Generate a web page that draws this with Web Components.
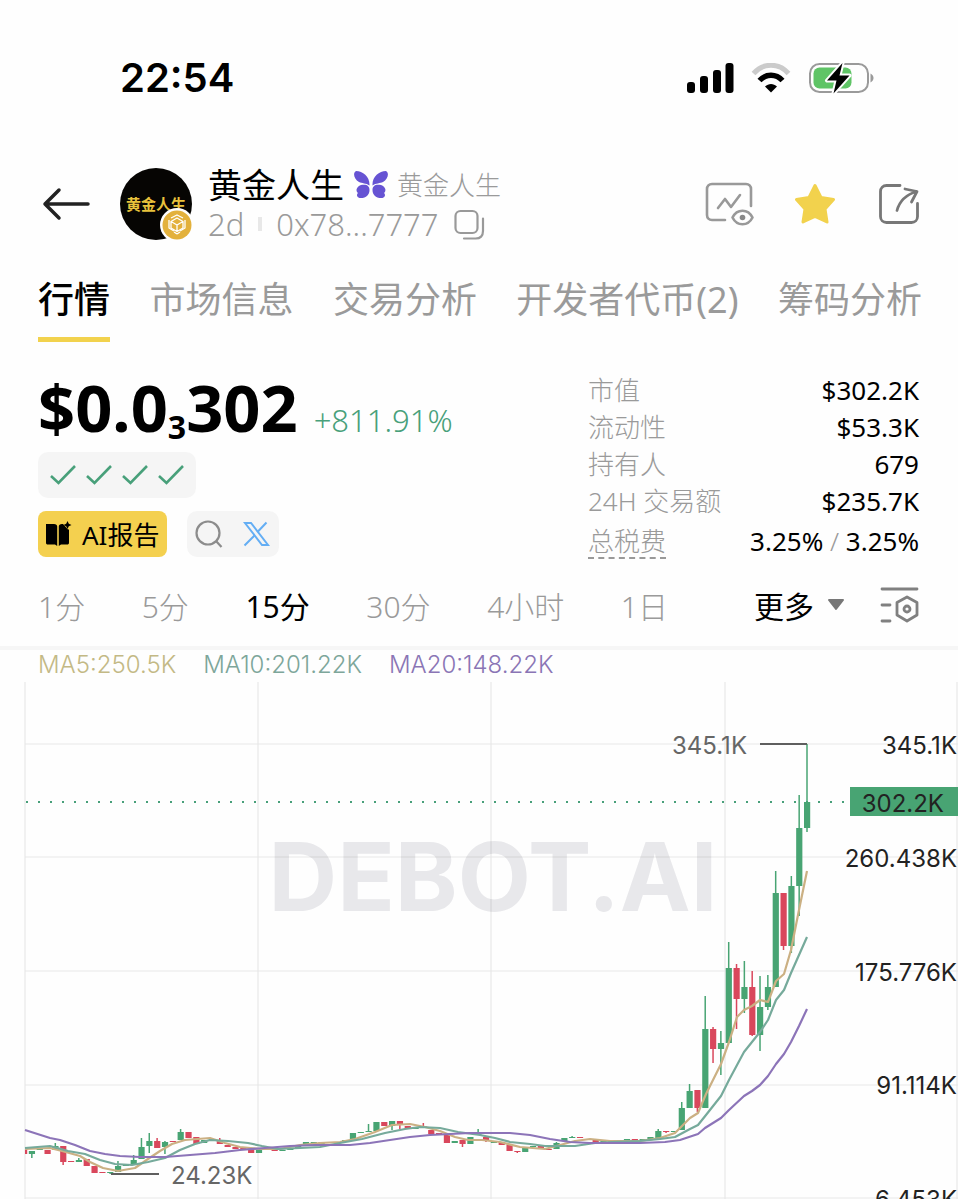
<!DOCTYPE html>
<html lang="zh-CN">
<head>
<meta charset="utf-8">
<meta name="viewport" content="width=device-width, initial-scale=1">
<title>黄金人生</title>
<style>
  body {
    margin: 0;
    background: #fefefe;
    color: #000;
    font-family: "Noto Sans", "Noto Sans CJK SC", sans-serif;
  }
</style>
</head>
<body>
<token-page></token-page>

<script>
const RESET = `
  * { box-sizing: border-box; }
  button, a {
    font: inherit;
    color: inherit;
    background: none;
    border: 0;
    padding: 0;
    margin: 0;
    text-decoration: none;
    cursor: pointer;
    white-space: nowrap;
  }
  svg { display: block; flex-shrink: 0; }
`;

/**
 * <status-bar time="22:54"> - phone status bar
 */
class StatusBar extends HTMLElement {
  constructor() {
    super();
    this.attachShadow({ mode: 'open' });
  }

  connectedCallback() {
    this.shadowRoot.innerHTML = `
      <style>
        ${RESET}
        :host {
          display: flex;
          align-items: center;
          justify-content: space-between;
          height: 156px;
          padding: 0 84px 0 120px;
        }
        time {
          font: 600 40px/48px Inter, sans-serif;
        }
        .icons {
          display: flex;
          align-items: center;
          gap: 17px;
        }
      </style>
      <time>${this.getAttribute('time')}</time>
      <div class="icons">
        <svg width="47" height="30" viewBox="0 0 47 30">
          <rect x="0" y="19" width="8" height="11" rx="3"/>
          <rect x="13" y="13" width="8" height="17" rx="3"/>
          <rect x="26" y="7" width="8" height="23" rx="3"/>
          <rect x="38.500" y="0" width="8" height="30" rx="3"/>
        </svg>
        <svg width="40" height="30" viewBox="0 0 40 30">
          <path d="M2.500 10.500C12 -0.500 28 -0.500 37.500 10.500" fill="none" stroke="#cbcbcb" stroke-width="5"/>
          <path d="M8.500 17.500C15 10.500 25 10.500 31.500 17.500" fill="none" stroke="#000" stroke-width="5.500"/>
          <path d="M14 23.500C17.500 20 22.500 20 26 23.500L20 29.500Z"/>
        </svg>
        <svg width="66" height="34" viewBox="0 0 66 34">
          <rect x="2" y="3" width="58" height="28" rx="9.500" fill="none" stroke="#9a9a9a" stroke-width="2"/>
          <rect x="5.500" y="6.500" width="38" height="21" rx="6" fill="#5fc466"/>
          <path d="M62.500 12.500C66.500 14.500 66.500 19.500 62.500 21.500Z" fill="#9a9a9a"/>
          <path d="M34.500 2L19 19.500H28.500L25.500 32.500L41.500 14.500H31.500Z" fill="#000" stroke="#fefefe" stroke-width="4" stroke-linejoin="round" paint-order="stroke"/>
        </svg>
      </div>
    `;
  }
}

/**
 * <token-header> - back arrow, avatar, token name and address, page actions
 * The default slot holds the token name.
 */
class TokenHeader extends HTMLElement {
  constructor() {
    super();
    this.attachShadow({ mode: 'open' });
  }

  connectedCallback() {
    this.shadowRoot.innerHTML = `
      <style>
        ${RESET}
        :host {
          display: flex;
          align-items: center;
          height: 96px;
          padding: 0 38px 0 42px;
        }
        .avatar {
          position: relative;
          display: flex;
          align-items: center;
          justify-content: center;
          width: 72px;
          height: 72px;
          margin: 0 16px 0 30px;
          border-radius: 50%;
          background: #060503;
          color: #e8c23c;
          font-size: 15px;
          font-weight: 700;
          line-height: 20px;
          flex-shrink: 0;
          white-space: nowrap;
        }
        .chain {
          position: absolute;
          right: -2px;
          bottom: -2px;
        }
        .info { flex: 1; }
        .row {
          display: flex;
          align-items: center;
          height: 40px;
          line-height: 36px;
          color: #9a9a9a;
          white-space: nowrap;
        }
        h1 {
          margin: 0 10px 0 0;
          font-size: 34px;
          font-weight: 400;
          line-height: 36px;
          color: #000;
        }
        .alias {
          margin-left: 9px;
          font-size: 26px;
          font-weight: 300;
        }
        .meta { height: 38px; font-size: 31px; font-weight: 300; }
        .sep {
          width: 4px;
          height: 14px;
          margin: 0 14px;
          background: #e8e8e8;
        }
        .meta button { margin-left: 15px; }
        .actions {
          display: flex;
          align-items: center;
          gap: 41px;
        }
      </style>
      <button aria-label="返回">
        <svg width="48" height="34" viewBox="0 0 48 34" fill="none" stroke="#222" stroke-width="3.500" stroke-linecap="round" stroke-linejoin="round">
          <path d="M46 17H3M17 3L3 17L17 31"/>
        </svg>
      </button>
      <div class="avatar">
        <span>黄金人生</span>
        <svg class="chain" width="34" height="34" viewBox="0 0 34 34">
          <circle cx="17" cy="17" r="17" fill="#fefefe"/>
          <circle cx="17" cy="17" r="14.500" fill="#e3b13c"/>
          <g fill="none" stroke="#fff" stroke-width="1.300" stroke-linejoin="round">
            <path d="M11 10L17 7L23 10M9 12V20L14 23M25 12V20L20 23M17 26L14 24M17 26L20 24"/>
            <path d="M17 10L23 13.500V20L17 23.500L11 20V13.500ZM11 13.500L17 17L23 13.500M17 17V23.500"/>
          </g>
        </svg>
      </div>
      <div class="info">
        <div class="row">
          <h1><slot></slot></h1>
          <svg width="34" height="28" viewBox="0 0 34 28" fill="#6653d3">
            <path d="M15.500 14.500C16 6 9 0 2 0C-1.500 2 0 8 5 11C8 12.500 12 12 15.500 14.500Z"/>
            <path d="M18.500 14.500C18 6 25 0 32 0C35.500 2 34 8 29 11C26 12.500 22 12 18.500 14.500Z"/>
            <path d="M7 14C13 13 15.500 15 15.500 19C15.500 24 12 27.500 5.500 27C2.500 26 2.500 23.500 4 22C1.500 20 2 16 7 14Z"/>
            <path d="M27 14C21 13 18.500 15 18.500 19C18.500 24 22 27.500 28.500 27C31.500 26 31.500 23.500 30 22C32.500 20 32 16 27 14Z"/>
          </svg>
          <span class="alias">${this.getAttribute('alias')}</span>
        </div>
        <div class="row meta">
          <span>${this.getAttribute('age')}</span>
          <span class="sep"></span>
          <span>${this.getAttribute('address')}</span>
          <button aria-label="复制">
            <svg width="31" height="31" viewBox="0 0 31 31" fill="none" stroke="#999" stroke-width="2.200" stroke-linecap="round">
              <rect x="1.500" y="2" width="22" height="22" rx="5"/>
              <path d="M29 9.500V22C29 27 26.500 29.500 21.500 29.500H10"/>
            </svg>
          </button>
        </div>
      </div>
      <div class="actions">
        <button aria-label="图表监控">
          <svg width="49" height="44" viewBox="0 0 49 44" fill="none" stroke="#999" stroke-width="2.600" stroke-linecap="round" stroke-linejoin="round">
            <path d="M46 24V7C46 4 44 2 41 2H7C4 2 2 4 2 7V33C2 36 4 38 7 38H20"/>
            <path d="M13 26L20 17L26 25L35 13"/>
            <path d="M27.500 35.500C32 26.500 43 26.500 47.500 35.500C43 44.500 32 44.500 27.500 35.500Z"/>
            <circle cx="37.500" cy="35.500" r="2.800" fill="#888" stroke="none"/>
          </svg>
        </button>
        <button aria-label="收藏">
          <svg width="42" height="42" viewBox="0 0 42 42">
            <path d="M20 2.500L26 14.500L38.500 16.500L30 26L32 39L20 33.500L8 39L10 26L1.500 16.500L14 14.500Z" fill="#f2d24d" stroke="#f2d24d" stroke-width="3" stroke-linejoin="round"/>
          </svg>
        </button>
        <button aria-label="分享">
          <svg width="42" height="42" viewBox="0 0 42 42" fill="none" stroke="#777" stroke-width="2.800" stroke-linecap="round" stroke-linejoin="round">
            <path d="M22 2.500H8.500C5 2.500 2.500 5 2.500 8.500V33.500C2.500 37 5 39.500 8.500 39.500H33.500C37 39.500 39.500 37 39.500 33.500V20.500"/>
            <path d="M19 27.500C21 20 27 12 38.500 8.500M27 6L39 8.500L33.500 19"/>
          </svg>
        </button>
      </div>
    `;
  }
}

/**
 * <tab-nav> with <tab-item> children, one of them active
 */
class TabNav extends HTMLElement {
  constructor() {
    super();
    this.attachShadow({ mode: 'open' });
  }

  connectedCallback() {
    this.shadowRoot.innerHTML = `
      <style>
        ${RESET}
        :host { display: block; padding: 24px 36px 0 38px; }
        nav { display: flex; justify-content: space-between; }
      </style>
      <nav><slot></slot></nav>
    `;
  }
}

class TabItem extends HTMLElement {
  constructor() {
    super();
    this.attachShadow({ mode: 'open' });
  }

  connectedCallback() {
    this.shadowRoot.innerHTML = `
      <style>
        ${RESET}
        :host { display: block; }
        a {
          display: block;
          height: 66px;
          font-size: 36px;
          line-height: 48px;
          color: #9a9a9a;
          border-bottom: 5px solid transparent;
        }
        :host([active]) a {
          color: #000;
          font-weight: 500;
          border-bottom-color: #f2d24d;
        }
      </style>
      <a href="#"><slot></slot></a>
    `;
  }
}

/**
 * <token-price> - price, change, audit marks and report links
 */
class TokenPrice extends HTMLElement {
  constructor() {
    super();
    this.attachShadow({ mode: 'open' });
  }

  connectedCallback() {
    const check = `
      <svg width="26" height="20" viewBox="0 0 26 20" fill="none" stroke="#48a07a" stroke-width="2.600">
        <path d="M1 11L8.500 18L25 1"/>
      </svg>`;

    this.shadowRoot.innerHTML = `
      <style>
        ${RESET}
        :host { display: block; }
        .price {
          display: flex;
          align-items: baseline;
          gap: 16px;
          height: 86px;
          line-height: 82px;
          white-space: nowrap;
        }
        .value { font-size: 65px; font-weight: 700; }
        sub {
          font-size: 32px;
          line-height: 0;
          vertical-align: -7px;
        }
        .change { font-size: 31px; font-weight: 300; color: #48a07a; }
        .checks {
          display: inline-flex;
          align-items: center;
          gap: 10px;
          height: 46px;
          padding: 0 12px;
          border-radius: 10px;
          background: #f5f5f5;
        }
        .links {
          display: flex;
          gap: 20px;
          margin-top: 13px;
        }
        .report {
          display: flex;
          align-items: center;
          gap: 10px;
          height: 46px;
          padding: 0 8px;
          border-radius: 8px;
          background: #f4d04f;
          font-size: 26px;
        }
        .social {
          display: flex;
          align-items: center;
          gap: 20px;
          height: 46px;
          padding: 0 9px 0 8px;
          border-radius: 10px;
          background: #f5f5f5;
        }
      </style>
      <div class="price">
        <span class="value">$0.0<sub>3</sub>302</span>
        <span class="change">+811.91%</span>
      </div>
      <div class="checks">${check.repeat(4)}</div>
      <div class="links">
        <button class="report">
          <svg width="26" height="26" viewBox="0 0 26 26">
            <path d="M0 3H8C10 3 11.200 4 11.200 5.500V25L9 23.500H2C0.500 23.500 0 23 0 21.500Z"/>
            <path d="M12.800 5.500C12.800 4 14 3 16 3H17L22 8.500H23V21.500C23 23 22.500 23.500 21 23.500H15L12.800 25Z"/>
            <path d="M21.500 0L22.800 2.700L25.500 4L22.800 5.300L21.500 8L20.200 5.300L17.500 4L20.200 2.700Z"/>
          </svg>
          <span>AI报告</span>
        </button>
        <div class="social">
          <button aria-label="搜索">
            <svg width="28" height="28" viewBox="0 0 28 28" fill="none" stroke="#8c8c8c" stroke-width="2.200">
              <circle cx="13" cy="13" r="11.500"/>
              <path d="M21 21L26.500 27"/>
            </svg>
          </button>
          <a href="#" aria-label="X">
            <svg width="27" height="26" viewBox="0 0 27 26" fill="none" stroke="#64aef4" stroke-width="2">
              <path d="M2 2H8L25 24H19Z"/>
              <path d="M23.500 1.500L14.500 11M11.500 14.500L1.500 24.500"/>
            </svg>
          </a>
        </div>
      </div>
    `;
  }
}

/**
 * <stat-list> with <stat-row label="..."> children
 */
class StatList extends HTMLElement {
  constructor() {
    super();
    this.attachShadow({ mode: 'open' });
    this.shadowRoot.innerHTML = `
      <style>
        :host { display: block; width: 331px; flex-shrink: 0; }
      </style>
      <slot></slot>
    `;
  }
}

class StatRow extends HTMLElement {
  constructor() {
    super();
    this.attachShadow({ mode: 'open' });
  }

  connectedCallback() {
    this.shadowRoot.innerHTML = `
      <style>
        :host {
          display: flex;
          justify-content: space-between;
          height: 37px;
          font-size: 26px;
          line-height: 37px;
          white-space: nowrap;
        }
        :host([dashed]) { padding-top: 3px; }
        .label { color: #9a9a9a; font-weight: 300; }
        :host([dashed]) .label {
          height: 34px;
          border-bottom: 2px dashed #999;
        }
      </style>
      <span class="label">${this.getAttribute('label')}</span>
      <span><slot></slot></span>
    `;
  }
}

/**
 * <interval-bar> - candle interval picker
 */
class IntervalBar extends HTMLElement {
  constructor() {
    super();
    this.attachShadow({ mode: 'open' });
  }

  connectedCallback() {
    const items = this.getAttribute('items').split(',');
    const active = this.getAttribute('active');

    this.shadowRoot.innerHTML = `
      <style>
        ${RESET}
        :host {
          display: flex;
          align-items: center;
          justify-content: space-between;
          box-sizing: border-box;
          height: 90px;
          padding: 4px 39px 0 38px;
          border-bottom: 4px solid #f6f6f6;
          font-size: 30px;
          font-weight: 300;
          color: #9a9a9a;
        }
        .items {
          display: flex;
          flex: 1;
          justify-content: space-between;
          margin-right: 86px;
        }
        .active, .more { color: #000; font-weight: 400; }
        .more {
          display: flex;
          align-items: center;
          gap: 13px;
          margin-right: 35px;
        }
      </style>
      <div class="items">
        ${items.map(t => `<button class="${t === active ? 'active' : ''}">${t}</button>`).join('')}
      </div>
      <button class="more">
        <span>更多</span>
        <svg width="18" height="12" viewBox="0 0 18 12"><path d="M2 1H16L9 10Z" fill="#777" stroke="#777" stroke-width="2" stroke-linejoin="round"/></svg>
      </button>
      <button aria-label="图表设置">
        <svg width="39" height="38" viewBox="0 0 39 38" fill="none" stroke="#808080" stroke-width="2.800" stroke-linecap="round" stroke-linejoin="round">
          <path d="M2 3H37M2 19H10M2 35H10"/>
          <path d="M27 11L37 16.500V29L27 35L17 29V16.500Z"/>
          <circle cx="27" cy="23" r="3"/>
        </svg>
      </button>
    `;
  }
}

/**
 * <kline-chart> - candles with three moving averages
 *
 * Candle: [top, bottom, up, high, low]; high and low may be left out.
 * All heights are in plot units, see the viewBox.
 */
const CANDLES = [
  [1149, 1154, 0], [1151, 1154, 1, 1151, 1158], [1148, 1150, 1], [1150, 1154, 0], [1146, 1150, 1, 1143],
  [1146, 1162, 0, 1146, 1165], [1161, 1162, 0], [1160, 1162, 1, 1158], [1159, 1166, 0], [1166, 1173, 0],
  [1172, 1173, 0], [1172, 1173, 1, 1172, 1174], [1166, 1172, 1, 1161], [1165, 1166, 1], [1160, 1165, 1, 1155],
  [1147, 1159, 1, 1138], [1141, 1146, 1, 1133, 1153], [1141, 1148, 0, 1138], [1142, 1147, 1, 1141, 1154], [1141, 1142, 0],
  [1132, 1140, 1, 1129], [1132, 1138, 0], [1137, 1144, 0], [1140, 1143, 1], [1139, 1141, 1],
  [1140, 1144, 0, 1138], [1145, 1147, 0], [1147, 1149, 0], [1148, 1150, 0], [1149, 1153, 0],
  [1150, 1153, 1], [1149, 1150, 1], [1150, 1151, 0], [1150, 1151, 1], [1148, 1150, 1],
  [1145, 1148, 1], [1142, 1144, 1], [1142, 1144, 1], [1142, 1144, 1], [1142, 1143, 1],
  [1142, 1143, 1], [1140, 1142, 1], [1133, 1139, 1], [1132, 1133, 1], [1131, 1132, 1, 1124],
  [1122, 1131, 1], [1122, 1126, 0], [1121, 1126, 1, 1121, 1130], [1121, 1125, 0, 1121, 1129], [1126, 1129, 0],
  [1127, 1129, 1], [1126, 1127, 0, 1123], [1130, 1134, 0], [1133, 1135, 0], [1135, 1143, 0],
  [1141, 1143, 1], [1140, 1144, 0, 1140, 1147], [1137, 1144, 1], [1134, 1135, 1, 1129], [1137, 1140, 0, 1137, 1142],
  [1141, 1143, 1], [1142, 1145, 0], [1145, 1151, 0], [1151, 1152, 0, 1151, 1153], [1148, 1152, 1],
  [1146, 1147, 1], [1146, 1148, 0], [1149, 1150, 0], [1143, 1149, 1, 1142], [1138, 1141, 1],
  [1137, 1138, 1, 1136], [1137, 1138, 0], [1139, 1140, 0], [1140, 1144, 0], [1141, 1143, 1],
  [1141, 1142, 1], [1140, 1141, 1], [1139, 1140, 1], [1139, 1141, 0], [1139, 1141, 1],
  [1137, 1140, 1], [1131, 1138, 1, 1129], [1131, 1132, 0, 1131, 1133], [1131, 1132, 1], [1108, 1130, 1, 1102],
  [1091, 1108, 1, 1084], [1090, 1108, 0, 1090, 1112], [1029, 1108, 1, 996], [1029, 1049, 0, 1027, 1063], [1043, 1049, 1, 1031, 1075],
  [968, 1043, 1, 942], [968, 999, 0, 964, 1029], [987, 999, 1, 961, 1013], [987, 1035, 0, 971, 1036], [1007, 1035, 1, 976, 1051],
  [987, 1007, 1, 975, 1010], [893, 987, 1, 871], [893, 946, 0, 893, 950], [886, 946, 1, 876, 953], [828, 886, 1, 795, 916],
  [802, 828, 1, 744, 832]
];

const AVERAGES = [
  {
    color: '#cbb083',
    points: '25,1149 50,1148 62,1151 80,1156 90,1162 103,1168 118,1171 135,1168 148,1159 160,1151 172,1144 185,1140 210,1138 225,1143 240,1147 260,1149 280,1149 300,1145 320,1143 340,1142 355,1139 375,1132 392,1125 410,1124 425,1127 440,1131 455,1137 468,1140 482,1140 500,1142 520,1147 545,1149 560,1145 575,1141 590,1139 610,1141 640,1141 660,1138 675,1133 690,1118 698,1113 706,1094 721,1064 729,1042 737,1017 744,1010 752,1006 760,1000 768,1002 776,981 784,974 791,950 799,910 807,871'
  },
  {
    color: '#76aa9b',
    points: '25,1148 50,1146 68,1151 85,1154 100,1160 115,1164 132,1165 148,1162 165,1158 180,1150 195,1144 210,1140 228,1141 248,1143 262,1146 278,1149 300,1148 320,1147 340,1143 362,1139 385,1133 405,1129 420,1127 440,1128 458,1132 480,1135 495,1138 510,1142 530,1144 545,1146 575,1146 595,1143 612,1142 640,1141 660,1139 675,1137 690,1129 698,1125 706,1115 721,1096 729,1080 744,1052 760,1032 768,1020 776,1000 784,990 791,973 799,955 807,937'
  },
  {
    color: '#8c74b8',
    points: '25,1130 50,1138 60,1140 75,1145 90,1151 105,1154 120,1156 140,1157 165,1157 190,1155 215,1153 240,1150 265,1148 290,1146 315,1145 350,1145 370,1143 390,1140 410,1137 430,1135 450,1134 470,1133 490,1133 510,1133 530,1135 550,1139 570,1142 590,1143 615,1143 640,1143 665,1142 680,1140 698,1134 705,1128 721,1118 729,1110 744,1096 752,1091 760,1085 768,1076 776,1064 784,1054 791,1042 799,1026 807,1009'
  }
];

class KlineChart extends HTMLElement {
  constructor() {
    super();
    this.attachShadow({ mode: 'open' });
  }

  connectedCallback() {
    this.shadowRoot.innerHTML = `
      <style>
        :host {
          display: block;
          font-family: Inter, sans-serif;
        }
        .legend {
          display: flex;
          gap: 27px;
          height: 32px;
          padding-left: 38px;
          font-size: 24px;
          font-weight: 300;
          line-height: 30px;
          white-space: nowrap;
        }
        .ma5 { color: #c3b985; }
        .ma10 { color: #7da69a; }
        .ma20 { color: #8a75b5; }
        svg { display: block; width: 100%; }
        .label { font-size: 24px; fill: #222; }
        .note { font-size: 24px; fill: #666; }
        .mark { font-size: 95px; font-weight: 700; fill: #e8e8eb; }
      </style>
      <div class="legend">
        <span class="ma5">MA5:250.5K</span>
        <span class="ma10">MA10:201.22K</span>
        <span class="ma20">MA20:148.22K</span>
      </div>
      <svg viewBox="0 682 958 517">
        <text class="mark" x="493" y="911" text-anchor="middle">DEBOT.AI</text>
        <path d="M25 682V1199M258 682V1199M491 682V1199M725 682V1199M957 682V1199M25 744H958M25 857H958M25 971H958M25 1085H958M25 1198H958" stroke="#000" stroke-opacity="0.090" stroke-width="1.200"/>
        <path d="M26 802H850" stroke="#48a07a" stroke-width="2" stroke-dasharray="2 10"/>
        <clipPath id="plot"><rect x="25" y="682" width="933" height="517"/></clipPath>
        <g clip-path="url(#plot)">${this._candles()}</g>
        ${AVERAGES.map(a => `<polyline points="${a.points}" fill="none" stroke="${a.color}" stroke-width="2.200" stroke-linejoin="round"/>`).join('')}
        <path d="M760 744H807M111 1174H159" stroke="#5f5f5f" stroke-width="2"/>
        <text class="note" x="747" y="754" text-anchor="end">345.1K</text>
        <text class="note" x="171" y="1184">24.23K</text>
        <rect x="850" y="787" width="108" height="29" fill="#48a473"/>
        <g class="label" text-anchor="end">
          <text x="957" y="754">345.1K</text>
          <text x="944" y="812">302.2K</text>
          <text x="957" y="867">260.438K</text>
          <text x="957" y="981">175.776K</text>
          <text x="957" y="1094">91.114K</text>
          <text x="957" y="1208">6.453K</text>
        </g>
      </svg>
    `;
  }

  _candles() {
    const step = 7.83;
    const last = CANDLES.length - 1;
    return CANDLES.map(([top, bottom, up, high = top, low = bottom], i) => {
      const x = 807 - (last - i) * step;
      const color = up ? '#48a473' : '#d9475c';
      return `<path d="M${x} ${high}V${low}" stroke="${color}" stroke-width="1.500"/>` +
        `<rect x="${x - 3}" y="${top}" width="6.200" height="${bottom - top}" fill="${color}"/>`;
    }).join('');
  }
}

/**
 * <token-page> - the whole token view
 */
class TokenPage extends HTMLElement {
  constructor() {
    super();
    this.attachShadow({ mode: 'open' });
    this.shadowRoot.innerHTML = `
      <style>
        :host { display: block; overflow: hidden; }
        .summary {
          display: flex;
          justify-content: space-between;
          padding: 24px 39px 0 38px;
        }
        .slash { color: #9a9a9a; font-weight: 300; }
        stat-list { padding-top: 6px; }
      </style>
      <status-bar time="22:54"></status-bar>
      <token-header alias="黄金人生" age="2d" address="0x78...7777">黄金人生</token-header>
      <tab-nav>
        <tab-item active>行情</tab-item>
        <tab-item>市场信息</tab-item>
        <tab-item>交易分析</tab-item>
        <tab-item>开发者代币(2)</tab-item>
        <tab-item>筹码分析</tab-item>
      </tab-nav>
      <div class="summary">
        <token-price></token-price>
        <stat-list>
          <stat-row label="市值">$302.2K</stat-row>
          <stat-row label="流动性">$53.3K</stat-row>
          <stat-row label="持有人">679</stat-row>
          <stat-row label="24H 交易额">$235.7K</stat-row>
          <stat-row label="总税费" dashed>3.25% <span class="slash">/</span> 3.25%</stat-row>
        </stat-list>
      </div>
      <interval-bar items="1分,5分,15分,30分,4小时,1日" active="15分"></interval-bar>
      <kline-chart></kline-chart>
    `;
  }
}

customElements.define('status-bar', StatusBar);
customElements.define('token-header', TokenHeader);
customElements.define('tab-nav', TabNav);
customElements.define('tab-item', TabItem);
customElements.define('token-price', TokenPrice);
customElements.define('stat-list', StatList);
customElements.define('stat-row', StatRow);
customElements.define('interval-bar', IntervalBar);
customElements.define('kline-chart', KlineChart);
customElements.define('token-page', TokenPage);
</script>
</body>
</html>
